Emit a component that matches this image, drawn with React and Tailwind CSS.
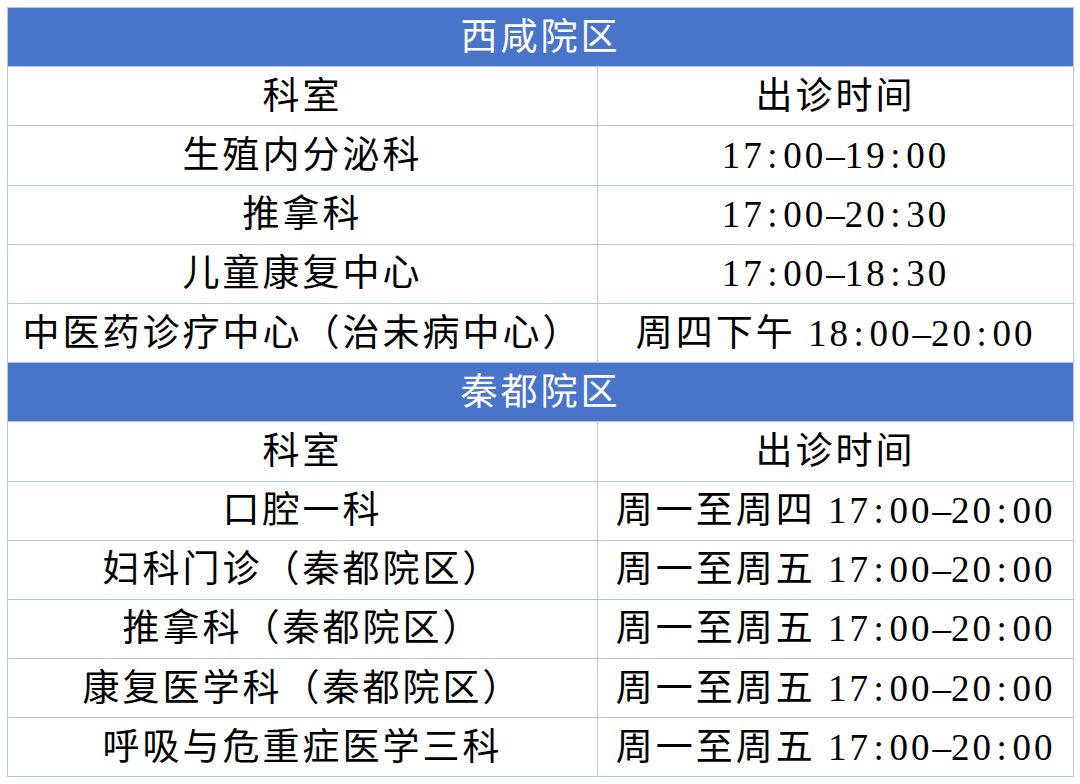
import React from "react";

const campuses = [
  {
    name: "西咸院区",
    rows: [
      ["生殖内分泌科", "17:00-19:00"],
      ["推拿科", "17:00-20:30"],
      ["儿童康复中心", "17:00-18:30"],
      ["中医药诊疗中心（治未病中心）", "周四下午 18:00-20:00"],
    ],
  },
  {
    name: "秦都院区",
    rows: [
      ["口腔一科", "周一至周四 17:00-20:00"],
      ["妇科门诊（秦都院区）", "周一至周五 17:00-20:00"],
      ["推拿科（秦都院区）", "周一至周五 17:00-20:00"],
      ["康复医学科（秦都院区）", "周一至周五 17:00-20:00"],
      ["呼吸与危重症医学三科", "周一至周五 17:00-20:00"],
    ],
  },
];

// colon and dash take a full half-width cell, like the original font
function Time({ text }) {
  return (
    <>
      {text.split("").map((c, i) =>
        c === ":" || c === "-" ? (
          <span key={i} className="inline-block w-[0.5em] text-center">
            {c === "-" ? "–" : c}
          </span>
        ) : (
          <span key={i}>{c}</span>
        )
      )}
    </>
  );
}

export default function App() {
  return (
    <div className="min-h-screen bg-white pl-[7px] pt-[7px]">
      <table
        className="w-[1066px] table-fixed border-collapse border border-[#8aa6da] text-[37px] leading-none tracking-[3px] text-black"
        style={{ fontFamily: '"Liberation Serif", "Noto Sans CJK SC", serif' }}
      >
        <colgroup>
          <col className="w-[590px]" />
          <col className="w-[476px]" />
        </colgroup>
        <tbody>
          {campuses.map((c) => (
            <React.Fragment key={c.name}>
              <tr className="h-[59.2px]">
                <td colSpan={2} className="border border-[#b4c7e7] bg-[#4874ca] text-center text-white">
                  {c.name}
                </td>
              </tr>
              <tr className="h-[59.2px]">
                <td className="border border-[#b4c7e7] text-center">科室</td>
                <td className="border border-[#b4c7e7] text-center">出诊时间</td>
              </tr>
              {c.rows.map(([dept, time]) => (
                <tr key={dept} className="h-[59.2px]">
                  <td className="whitespace-nowrap border border-[#b4c7e7] text-center">{dept}</td>
                  <td className="whitespace-nowrap border border-[#b4c7e7] text-center">
                    <Time text={time} />
                  </td>
                </tr>
              ))}
            </React.Fragment>
          ))}
        </tbody>
      </table>
    </div>
  );
}
